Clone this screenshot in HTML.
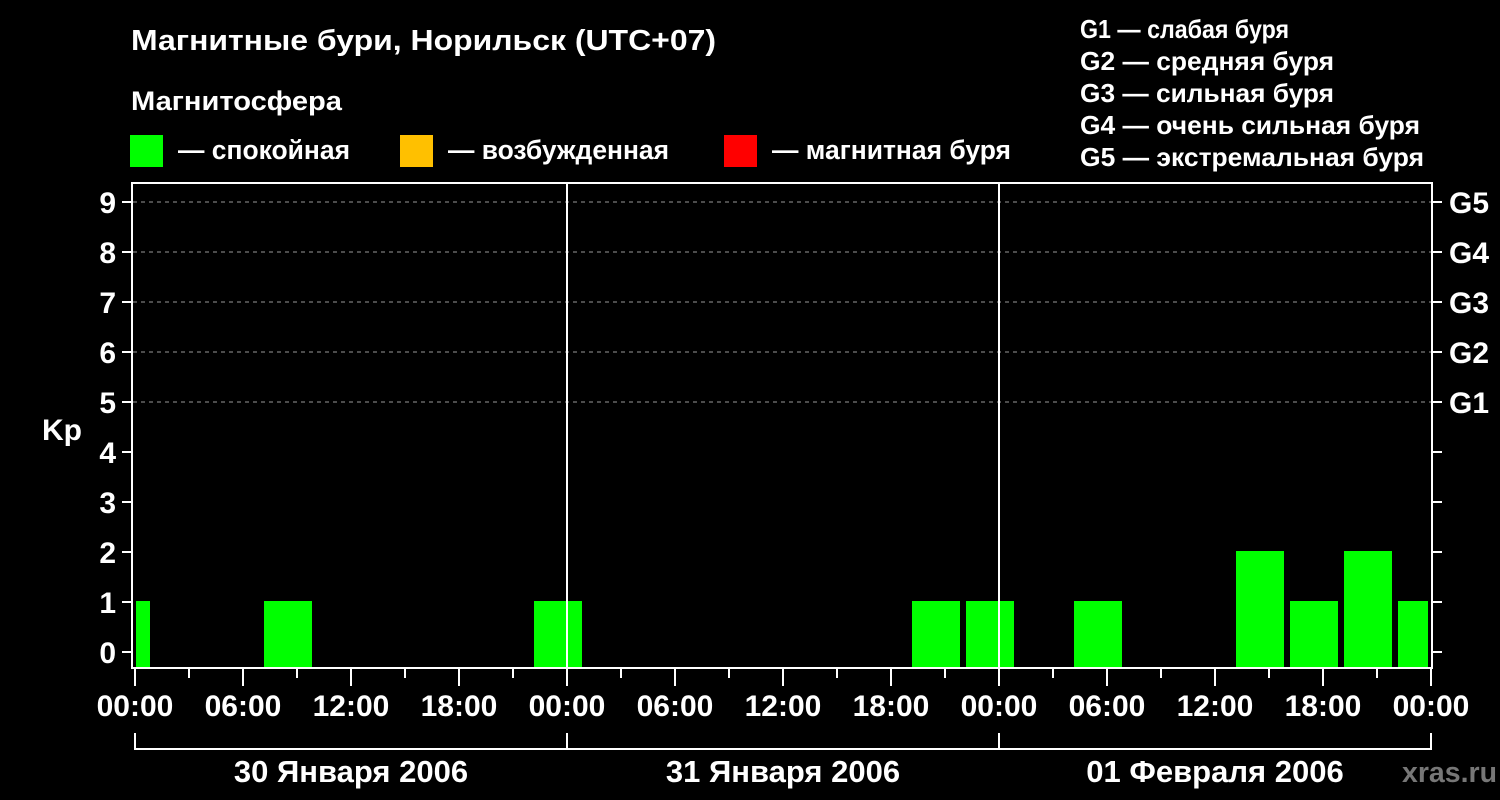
<!DOCTYPE html>
<html><head><meta charset="utf-8"><style>
html,body{margin:0;padding:0;background:#000;width:1500px;height:800px;overflow:hidden}
svg{display:block}
text{font-family:"Liberation Sans",sans-serif;font-weight:bold;fill:#fff}
</style></head><body>
<svg width="1500" height="800" viewBox="0 0 1500 800">
<rect width="1500" height="800" fill="#000"/>
<text x="131" y="50" font-size="29" textLength="585" lengthAdjust="spacingAndGlyphs">Магнитные бури, Норильск (UTC+07)</text>
<text x="131" y="110" font-size="27" textLength="211" lengthAdjust="spacingAndGlyphs">Магнитосфера</text>
<rect x="130" y="135" width="33" height="32" fill="#00ff00"/>
<text x="178" y="159" font-size="27" textLength="172" lengthAdjust="spacingAndGlyphs">— спокойная</text>
<rect x="400" y="135" width="33" height="32" fill="#ffc000"/>
<text x="448" y="159" font-size="27" textLength="221" lengthAdjust="spacingAndGlyphs">— возбужденная</text>
<rect x="724" y="135" width="33" height="32" fill="#ff0000"/>
<text x="772" y="159" font-size="27" textLength="239" lengthAdjust="spacingAndGlyphs">— магнитная буря</text>
<g font-size="26">
<text x="1080" y="38" textLength="209" lengthAdjust="spacingAndGlyphs">G1 — слабая буря</text>
<text x="1080" y="70" textLength="254" lengthAdjust="spacingAndGlyphs">G2 — средняя буря</text>
<text x="1080" y="102" textLength="254" lengthAdjust="spacingAndGlyphs">G3 — сильная буря</text>
<text x="1080" y="134" textLength="340" lengthAdjust="spacingAndGlyphs">G4 — очень сильная буря</text>
<text x="1080" y="166" textLength="344" lengthAdjust="spacingAndGlyphs">G5 — экстремальная буря</text>
</g>
<g stroke="#999" stroke-width="1" stroke-dasharray="4,4">
<line x1="133" y1="202" x2="1431" y2="202"/>
<line x1="133" y1="252" x2="1431" y2="252"/>
<line x1="133" y1="302" x2="1431" y2="302"/>
<line x1="133" y1="352" x2="1431" y2="352"/>
<line x1="133" y1="402" x2="1431" y2="402"/>
</g>
<g fill="#00ff00">
<rect x="136" y="601" width="14" height="66"/>
<rect x="264" y="601" width="48" height="66"/>
<rect x="534" y="601" width="48" height="66"/>
<rect x="912" y="601" width="48" height="66"/>
<rect x="966" y="601" width="48" height="66"/>
<rect x="1074" y="601" width="48" height="66"/>
<rect x="1236" y="551" width="48" height="116"/>
<rect x="1290" y="601" width="48" height="66"/>
<rect x="1344" y="551" width="48" height="116"/>
<rect x="1398" y="601" width="30" height="66"/>
</g>
<g stroke="#fff" stroke-width="2" fill="none">
<rect x="132" y="183" width="1300" height="485"/>
<line x1="567" y1="183" x2="567" y2="668"/>
<line x1="999" y1="183" x2="999" y2="668"/>
<path d="M122 202H131M122 252H131M122 302H131M122 352H131M122 402H131M122 452H131M122 502H131M122 552H131M122 602H131M122 652H131"/>
<path d="M1433 202H1442M1433 252H1442M1433 302H1442M1433 352H1442M1433 402H1442M1433 452H1442M1433 502H1442M1433 552H1442M1433 602H1442M1433 652H1442"/>
<path d="M135 669V686M243 669V686M351 669V686M459 669V686M567 669V686M675 669V686M783 669V686M891 669V686M999 669V686M1107 669V686M1215 669V686M1323 669V686M1431 669V686"/>
<path d="M189 669V678M297 669V678M405 669V678M513 669V678M621 669V678M729 669V678M837 669V678M945 669V678M1053 669V678M1161 669V678M1269 669V678M1377 669V678"/>
<path d="M135 733V749H1431V733M567 733V749M999 733V749"/>
</g>
<g font-size="30" text-anchor="end">
<text x="116" y="213">9</text><text x="116" y="263">8</text><text x="116" y="313">7</text>
<text x="116" y="363">6</text><text x="116" y="413">5</text><text x="116" y="463">4</text>
<text x="116" y="513">3</text><text x="116" y="563">2</text><text x="116" y="613">1</text>
<text x="116" y="663">0</text>
</g>
<text x="42" y="440" font-size="30">Kp</text>
<g font-size="30">
<text x="1449" y="213">G5</text><text x="1449" y="263">G4</text><text x="1449" y="313">G3</text>
<text x="1449" y="363">G2</text><text x="1449" y="413">G1</text>
</g>
<g font-size="30" text-anchor="middle">
<text x="135" y="716">00:00</text><text x="243" y="716">06:00</text><text x="351" y="716">12:00</text><text x="459" y="716">18:00</text>
<text x="567" y="716">00:00</text><text x="675" y="716">06:00</text><text x="783" y="716">12:00</text><text x="891" y="716">18:00</text>
<text x="999" y="716">00:00</text><text x="1107" y="716">06:00</text><text x="1215" y="716">12:00</text><text x="1323" y="716">18:00</text>
<text x="1431" y="716">00:00</text>
</g>
<g font-size="31" text-anchor="middle">
<text x="351" y="782">30 Января 2006</text>
<text x="783" y="782">31 Января 2006</text>
<text x="1215" y="782">01 Февраля 2006</text>
</g>
<text x="1402" y="782" font-size="29" style="fill:#777" textLength="95" lengthAdjust="spacingAndGlyphs">xras.ru</text>
</svg>
</body></html>
